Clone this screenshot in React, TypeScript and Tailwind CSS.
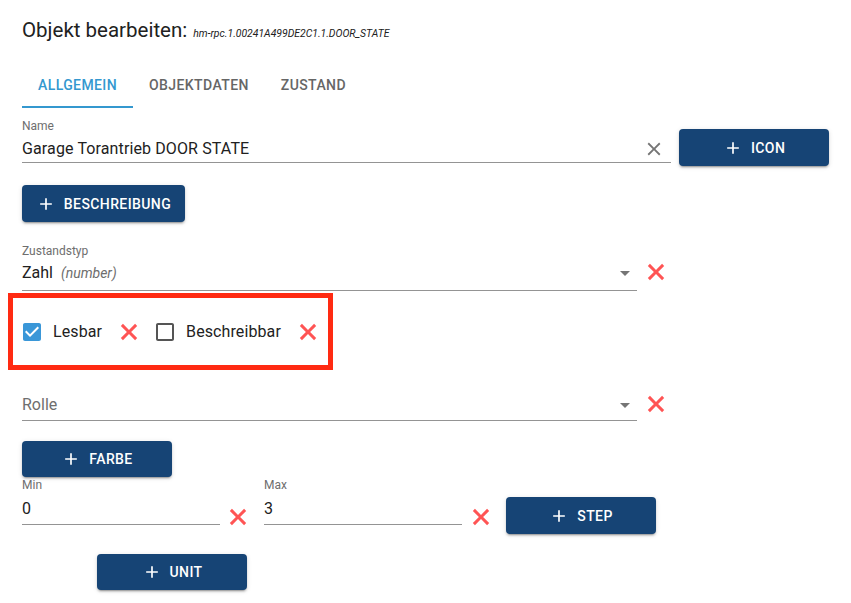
import type { ReactNode } from "react";

const BUTTON_CLASS =
  "flex items-center justify-center gap-2 rounded-[4px] bg-[#164475] text-[14px] font-medium uppercase leading-[20px] tracking-[0.4px] text-white shadow-[0_3px_1px_-2px_rgba(0,0,0,0.2),0_2px_2px_0_rgba(0,0,0,0.14),0_1px_5px_0_rgba(0,0,0,0.12)]";

function PlusIcon() {
  return (
    <svg aria-hidden="true" className="size-[20px] shrink-0" fill="currentColor" viewBox="0 0 24 24">
      <path d="M19 13h-6v6h-2v-6H5v-2h6V5h2v6h6v2z" />
    </svg>
  );
}

function RemoveIcon() {
  return (
    <svg aria-hidden="true" className="size-[28px] shrink-0 text-[#ff5454]" fill="currentColor" viewBox="0 0 24 24">
      <path d="M19 6.8 17.2 5 12 10.2 6.8 5 5 6.8 10.2 12 5 17.2 6.8 19 12 13.8 17.2 19 19 17.2 13.8 12z" />
    </svg>
  );
}

function ClearIcon() {
  return (
    <svg aria-hidden="true" className="size-[22px] shrink-0 text-[#757575]" fill="currentColor" viewBox="0 0 24 24">
      <path d="M19 6.41 17.59 5 12 10.59 6.41 5 5 6.41 10.59 12 5 17.59 6.41 19 12 13.41 17.59 19 19 17.59 13.41 12z" />
    </svg>
  );
}

function DropIcon() {
  return (
    <svg aria-hidden="true" className="size-[24px] shrink-0 text-[#757575]" fill="currentColor" viewBox="0 0 24 24">
      <path d="M7 10l5 5 5-5z" />
    </svg>
  );
}

function CheckboxIcon({ checked }: { checked: boolean }) {
  if (checked) {
    return (
      <svg aria-hidden="true" className="size-[24px] shrink-0 text-[#3a97d8]" fill="currentColor" viewBox="0 0 24 24">
        <path d="M19 3H5c-1.11 0-2 .9-2 2v14c0 1.1.89 2 2 2h14c1.11 0 2-.9 2-2V5c0-1.1-.89-2-2-2zm-9 14l-5-5 1.41-1.41L10 14.17l7.59-7.59L19 8l-9 9z" />
      </svg>
    );
  }
  return (
    <svg aria-hidden="true" className="size-[24px] shrink-0 text-[#555555]" fill="currentColor" viewBox="0 0 24 24">
      <path d="M19 5v14H5V5h14m0-2H5c-1.1 0-2 .9-2 2v14c0 1.1.9 2 2 2h14c1.1 0 2-.9 2-2V5c0-1.1-.9-2-2-2z" />
    </svg>
  );
}

function ActionButton({ label, className }: { label: string; className?: string }) {
  return (
    <button className={`${BUTTON_CLASS} ${className ?? ""}`} type="button">
      <PlusIcon />
      {label}
    </button>
  );
}

function FieldLabel({ children }: { children: ReactNode }) {
  return <div className="h-[16px] text-[12px] leading-[16px] text-[#6e6e6e]">{children}</div>;
}

function Tab({ label, active }: { label: string; active?: boolean }) {
  return (
    <div
      className={`flex h-[48px] min-w-[90px] items-center justify-center border-b-2 px-4 pt-[4px] text-[14px] font-medium uppercase tracking-[0.4px] ${
        active ? "border-[#3498cf] text-[#3498cf]" : "border-transparent text-[#666666]"
      }`}
    >
      {label}
    </div>
  );
}

function CheckItem({ label, checked }: { label: string; checked: boolean }) {
  return (
    <div className="flex items-center">
      <CheckboxIcon checked={checked} />
      <span className="ml-[9px] text-[16px] leading-[24px] tracking-[0.1px] text-[#222222]">{label}</span>
      <span className="ml-[13px]">
        <RemoveIcon />
      </span>
    </div>
  );
}

export default function App() {
  return (
    <div className="h-[603px] w-[851px] overflow-hidden bg-white px-[22px] pt-[18px] font-[Roboto,sans-serif] text-[#212121]">
      {/* header */}
      <div className="flex items-baseline">
        <span className="text-[20.5px] leading-[24px]">Objekt bearbeiten:</span>
        <span className="ml-[6px] text-[10.4px] italic">hm-rpc.1.00241A499DE2C1.1.DOOR_STATE</span>
      </div>

      <div className="mt-[18px] flex">
        <Tab active label="Allgemein" />
        <Tab label="Objektdaten" />
        <Tab label="Zustand" />
      </div>

      {/* Name */}
      <div className="mt-[10px] flex items-start">
        <div className="w-[650px]">
          <FieldLabel>Name</FieldLabel>
          <div className="mt-[3px] flex h-[26px] items-start border-b border-[#949494] pr-[6px]">
            <span className="flex-1 text-[16px] leading-[24px] tracking-[0.12px]">Garage Torantrieb DOOR STATE</span>
            <span className="mt-[1px]">
              <ClearIcon />
            </span>
          </div>
        </div>
        <ActionButton className="ml-[8px] mt-[11px] h-[37px] w-[150px]" label="Icon" />
      </div>

      <ActionButton className="mt-[19px] h-[37px] w-[163px]" label="Beschreibung" />

      {/* Zustandstyp */}
      <div className="mt-[21px] flex items-start">
        <div className="w-[615px]">
          <FieldLabel>Zustandstyp</FieldLabel>
          <div className="mt-[2px] flex h-[30px] items-start border-b border-[#949494]">
            <span className="flex-1 text-[16px] leading-[24px]">
              Zahl
              <span className="ml-[8px] text-[14px] italic text-[#6e6e6e]">(number)</span>
            </span>
            <DropIcon />
          </div>
        </div>
        <span className="ml-[5px] mt-[15px]">
          <RemoveIcon />
        </span>
      </div>

      {/* highlighted flags */}
      <div className="-ml-[14px] mt-[2px] flex h-[77px] w-[325px] items-center gap-[10px] border-[5px] border-[#ff2a12] pl-[7px]">
        <CheckItem checked label="Lesbar" />
        <CheckItem checked={false} label="Beschreibbar" />
      </div>

      {/* Rolle */}
      <div className="mt-[23px] flex items-start">
        <div className="flex h-[28px] w-[615px] items-start border-b border-[#949494]">
          <span className="flex-1 text-[16px] leading-[24px] text-[#6e6e6e]">Rolle</span>
          <DropIcon />
        </div>
        <span className="-mt-[3px] ml-[5px]">
          <RemoveIcon />
        </span>
      </div>

      <ActionButton className="mt-[20px] h-[36px] w-[150px]" label="Farbe" />

      {/* Min / Max */}
      <div className="flex items-start">
        <div className="w-[198px]">
          <FieldLabel>Min</FieldLabel>
          <div className="mt-[4px] h-[28px] border-b border-[#949494] text-[16px] leading-[24px]">0</div>
        </div>
        <span className="ml-[4px] mt-[26px]">
          <RemoveIcon />
        </span>
        <div className="ml-[12px] w-[198px]">
          <FieldLabel>Max</FieldLabel>
          <div className="mt-[4px] h-[28px] border-b border-[#949494] text-[16px] leading-[24px]">3</div>
        </div>
        <span className="ml-[5px] mt-[26px]">
          <RemoveIcon />
        </span>
        <ActionButton className="ml-[11px] mt-[20px] h-[37px] w-[150px]" label="Step" />
      </div>

      <ActionButton className="ml-[75px] mt-[20px] h-[36px] w-[150px]" label="Unit" />
    </div>
  );
}
